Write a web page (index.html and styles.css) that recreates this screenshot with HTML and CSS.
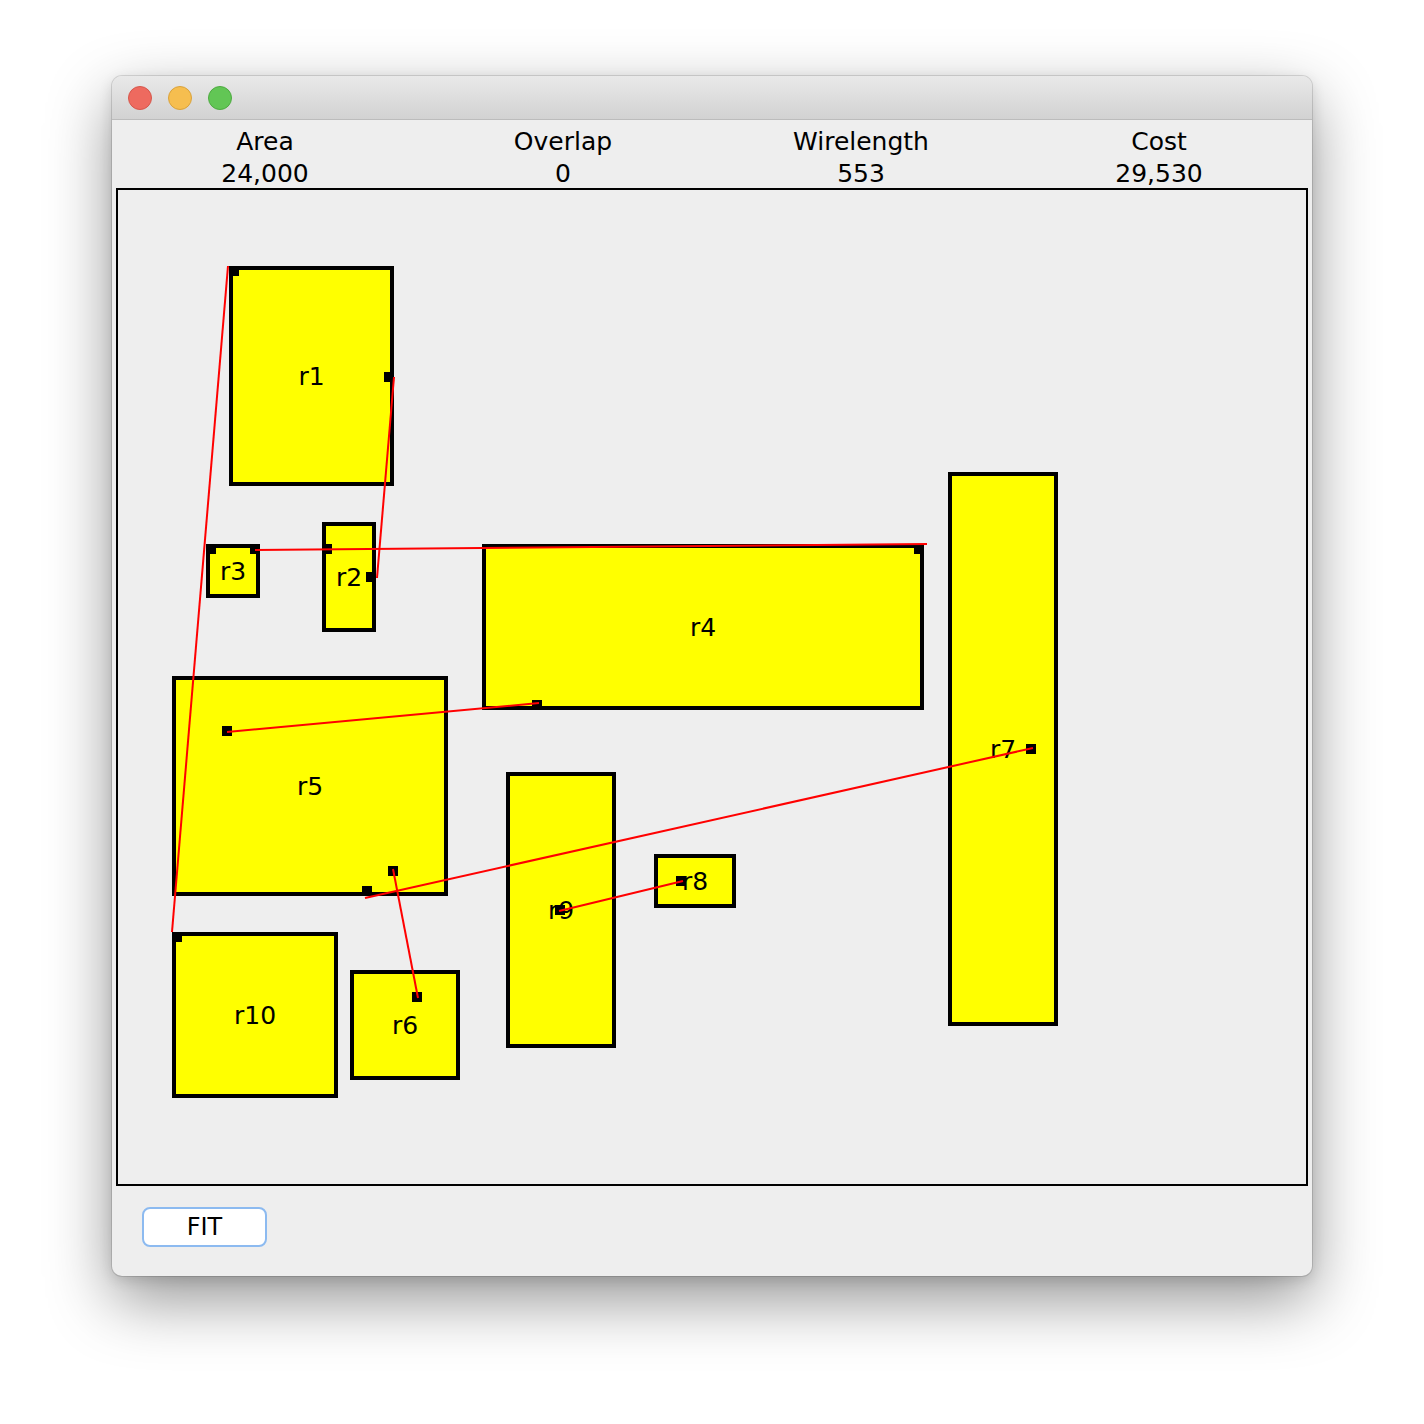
FILE: index.html
```html
<!DOCTYPE html>
<html>
<head>
<meta charset="utf-8">
<link rel="stylesheet" href="styles.css">
</head>
<body>
<div class="window">
  <div class="titlebar">
    <span class="light red"></span>
    <span class="light yellow"></span>
    <span class="light green"></span>
  </div>
  <div class="content">
    <div class="stats">
      <div class="stat"><div>Area</div><div>24,000</div></div>
      <div class="stat"><div>Overlap</div><div>0</div></div>
      <div class="stat"><div>Wirelength</div><div>553</div></div>
      <div class="stat"><div>Cost</div><div>29,530</div></div>
    </div>
    <div class="canvas">
      <svg class="board" width="1188" height="994" viewBox="118 190 1188 994" xmlns="http://www.w3.org/2000/svg">
        <g class="blocks">
          <rect x="231" y="268" width="161" height="216"/>
          <rect x="208" y="546" width="50" height="50"/>
          <rect x="324" y="524" width="50" height="106"/>
          <rect x="484" y="546" width="438" height="162"/>
          <rect x="174" y="678" width="272" height="216"/>
          <rect x="174" y="934" width="162" height="162"/>
          <rect x="352" y="972" width="106" height="106"/>
          <rect x="508" y="774" width="106" height="272"/>
          <rect x="656" y="856" width="78" height="50"/>
          <rect x="950" y="474" width="106" height="550"/>
        </g>
        <g class="labels">
          <text x="311.5" y="385">r1</text>
          <text x="233" y="580">r3</text>
          <text x="349" y="586">r2</text>
          <text x="703" y="636">r4</text>
          <text x="310" y="795">r5</text>
          <text x="255" y="1024">r10</text>
          <text x="405" y="1034">r6</text>
          <text x="561" y="919">r9</text>
          <text x="695" y="890">r8</text>
          <text x="1003" y="758">r7</text>
        </g>
        <g class="pins">
          <rect x="229" y="266" width="10" height="10"/>
          <rect x="384" y="372" width="10" height="10"/>
          <rect x="366" y="572" width="10" height="10"/>
          <rect x="322" y="544" width="10" height="10"/>
          <rect x="206" y="544" width="10" height="10"/>
          <rect x="250" y="544" width="10" height="10"/>
          <rect x="914" y="544" width="10" height="10"/>
          <rect x="532" y="700" width="10" height="10"/>
          <rect x="222" y="726" width="10" height="10"/>
          <rect x="362" y="886" width="10" height="10"/>
          <rect x="388" y="866" width="10" height="10"/>
          <rect x="412" y="992" width="10" height="10"/>
          <rect x="1026" y="744" width="10" height="10"/>
          <rect x="676" y="876" width="10" height="10"/>
          <rect x="555" y="905" width="10" height="10"/>
          <rect x="172" y="932" width="10" height="10"/>
        </g>
        <g class="nets">
          <line x1="228" y1="266" x2="172" y2="932"/>
          <line x1="394" y1="377" x2="377" y2="578"/>
          <line x1="255" y1="550" x2="927" y2="544"/>
          <line x1="227" y1="732" x2="539" y2="703"/>
          <line x1="1033" y1="748" x2="365" y2="898"/>
          <line x1="393" y1="869" x2="418" y2="998"/>
          <line x1="559" y1="911" x2="683" y2="881"/>
        </g>
      </svg>
    </div>
    <div class="footer">
      <button class="fit">FIT</button>
    </div>
  </div>
</div>
</body>
</html>
```

FILE: styles.css
```css
html, body {
  margin: 0;
  padding: 0;
  background: #ffffff;
}
body {
  width: 1424px;
  height: 1424px;
  overflow: hidden;
  font-family: "DejaVu Sans", "Liberation Sans", sans-serif;
  color: #000;
}
.window {
  margin: 76px 0 0 112px;
  width: 1200px;
  height: 1200px;
  border-radius: 10px;
  overflow: hidden;
  display: flex;
  flex-direction: column;
  background: #eeeeee;
  box-shadow: 0 0 0 1px rgba(0,0,0,0.12), 0 24px 64px rgba(0,0,0,0.42), 0 4px 14px rgba(0,0,0,0.12);
}
.titlebar {
  height: 43px;
  flex: none;
  border-bottom: 1px solid #bcbcbc;
  background: linear-gradient(#e9e9e9, #d2d2d2);
  display: flex;
  align-items: center;
  padding-left: 16px;
  gap: 16px;
}
.light {
  width: 24px;
  height: 24px;
  border-radius: 50%;
  box-sizing: border-box;
}
.red { background: #ee6a5f; border: 1px solid #d5574c; }
.yellow { background: #f6be4f; border: 1px solid #d9a23c; }
.green { background: #62c655; border: 1px solid #4eaa41; }
.content {
  flex: 1;
  display: flex;
  flex-direction: column;
}
.stats {
  height: 68px;
  box-sizing: border-box;
  padding-top: 6px;
  margin: 0 4px;
  display: grid;
  grid-template-columns: repeat(4, 1fr);
  font-size: 25px;
  line-height: 32px;
  text-align: center;
}
.canvas {
  margin: 0 4px;
  height: 998px;
  box-sizing: border-box;
  border: 2px solid #000;
  background: #eeeeee;
}
.board {
  display: block;
}
.blocks rect {
  fill: #ffff00;
  stroke: #000;
  stroke-width: 4;
  shape-rendering: crispEdges;
}
.labels text {
  font-family: "DejaVu Sans", sans-serif;
  font-size: 25px;
  text-anchor: middle;
  fill: #000;
}
.pins rect {
  fill: #000;
  shape-rendering: crispEdges;
}
.nets line {
  stroke: #ff0000;
  stroke-width: 2;
}
.footer {
  flex: 1;
  padding: 21px 0 0 30px;
}
.fit {
  width: 125px;
  height: 40px;
  box-sizing: border-box;
  border: 2px solid #8cbaf0;
  border-radius: 8px;
  background: #ffffff;
  font-family: "DejaVu Sans", sans-serif;
  font-size: 24px;
  color: #000;
  padding: 0;
}
```
